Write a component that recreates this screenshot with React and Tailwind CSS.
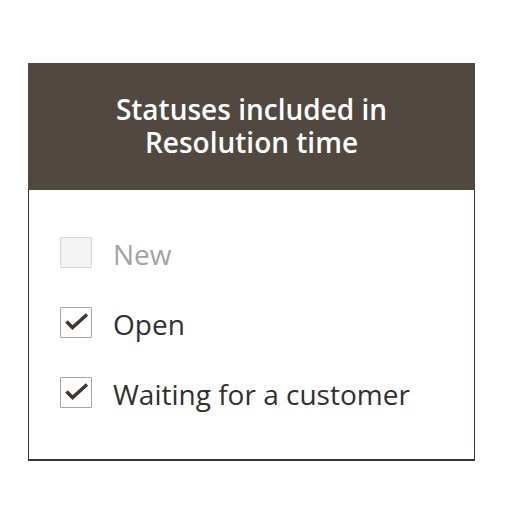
import { useState } from 'react'

const statuses = [
  { id: 'new', label: 'New', checked: false, disabled: true },
  { id: 'open', label: 'Open', checked: true },
  { id: 'waiting', label: 'Waiting for a customer', checked: true },
]

const Checkbox = ({ checked, disabled, onChange }) => (
  <button
    type="button"
    onClick={disabled ? undefined : onChange}
    className={
      disabled
        ? 'relative w-[32px] h-[31px] shrink-0 border-[1.5px] border-[#d6d6d6] bg-[#f3f3f3] rounded-[1px]'
        : 'relative w-[32px] h-[31px] shrink-0 border-[1.5px] border-[#a6a6a6] bg-white rounded-[1px]'
    }
  >
    {checked && (
      <svg className="absolute left-[-1px] top-[-1px]" width="32" height="31" viewBox="0 0 32 31" fill="none">
        <path d="M6.5 14.5 L12.5 20.5 L27 7.5" stroke="#40362f" strokeWidth="3.5" strokeLinecap="butt" strokeLinejoin="miter" />
      </svg>
    )}
  </button>
)

export default function App() {
  const [items, setItems] = useState(statuses)

  const toggle = (id) =>
    setItems((prev) => prev.map((s) => (s.id === id ? { ...s, checked: !s.checked } : s)))

  return (
    <div className="w-[512px] h-[508px] bg-white font-['Open_Sans',sans-serif]">
      <div className="ml-[28px] pt-[63px] w-[447px]">
        <div className="h-[127px] bg-[#514840] flex items-center justify-center">
          <h2 className="text-white text-[28px] font-semibold leading-[33px] text-center pb-[1px]">
            Statuses included in
            <br />
            Resolution time
          </h2>
        </div>
        <div className="border-x-[1.5px] border-b-2 border-[#3f352e] pl-[31px] pt-[47px] pb-[51px] flex flex-col gap-[39px]">
          {items.map((s) => (
            <label key={s.id} className="flex items-center gap-[21px] h-[31px]">
              <Checkbox checked={s.checked} disabled={s.disabled} onChange={() => toggle(s.id)} />
              <span
                className={
                  s.disabled
                    ? 'text-[28px] leading-none pt-[3px] text-[#a3a3a3]'
                    : 'text-[28px] leading-none pt-[3px] text-[#303030]'
                }
              >
                {s.label}
              </span>
            </label>
          ))}
        </div>
      </div>
    </div>
  )
}
